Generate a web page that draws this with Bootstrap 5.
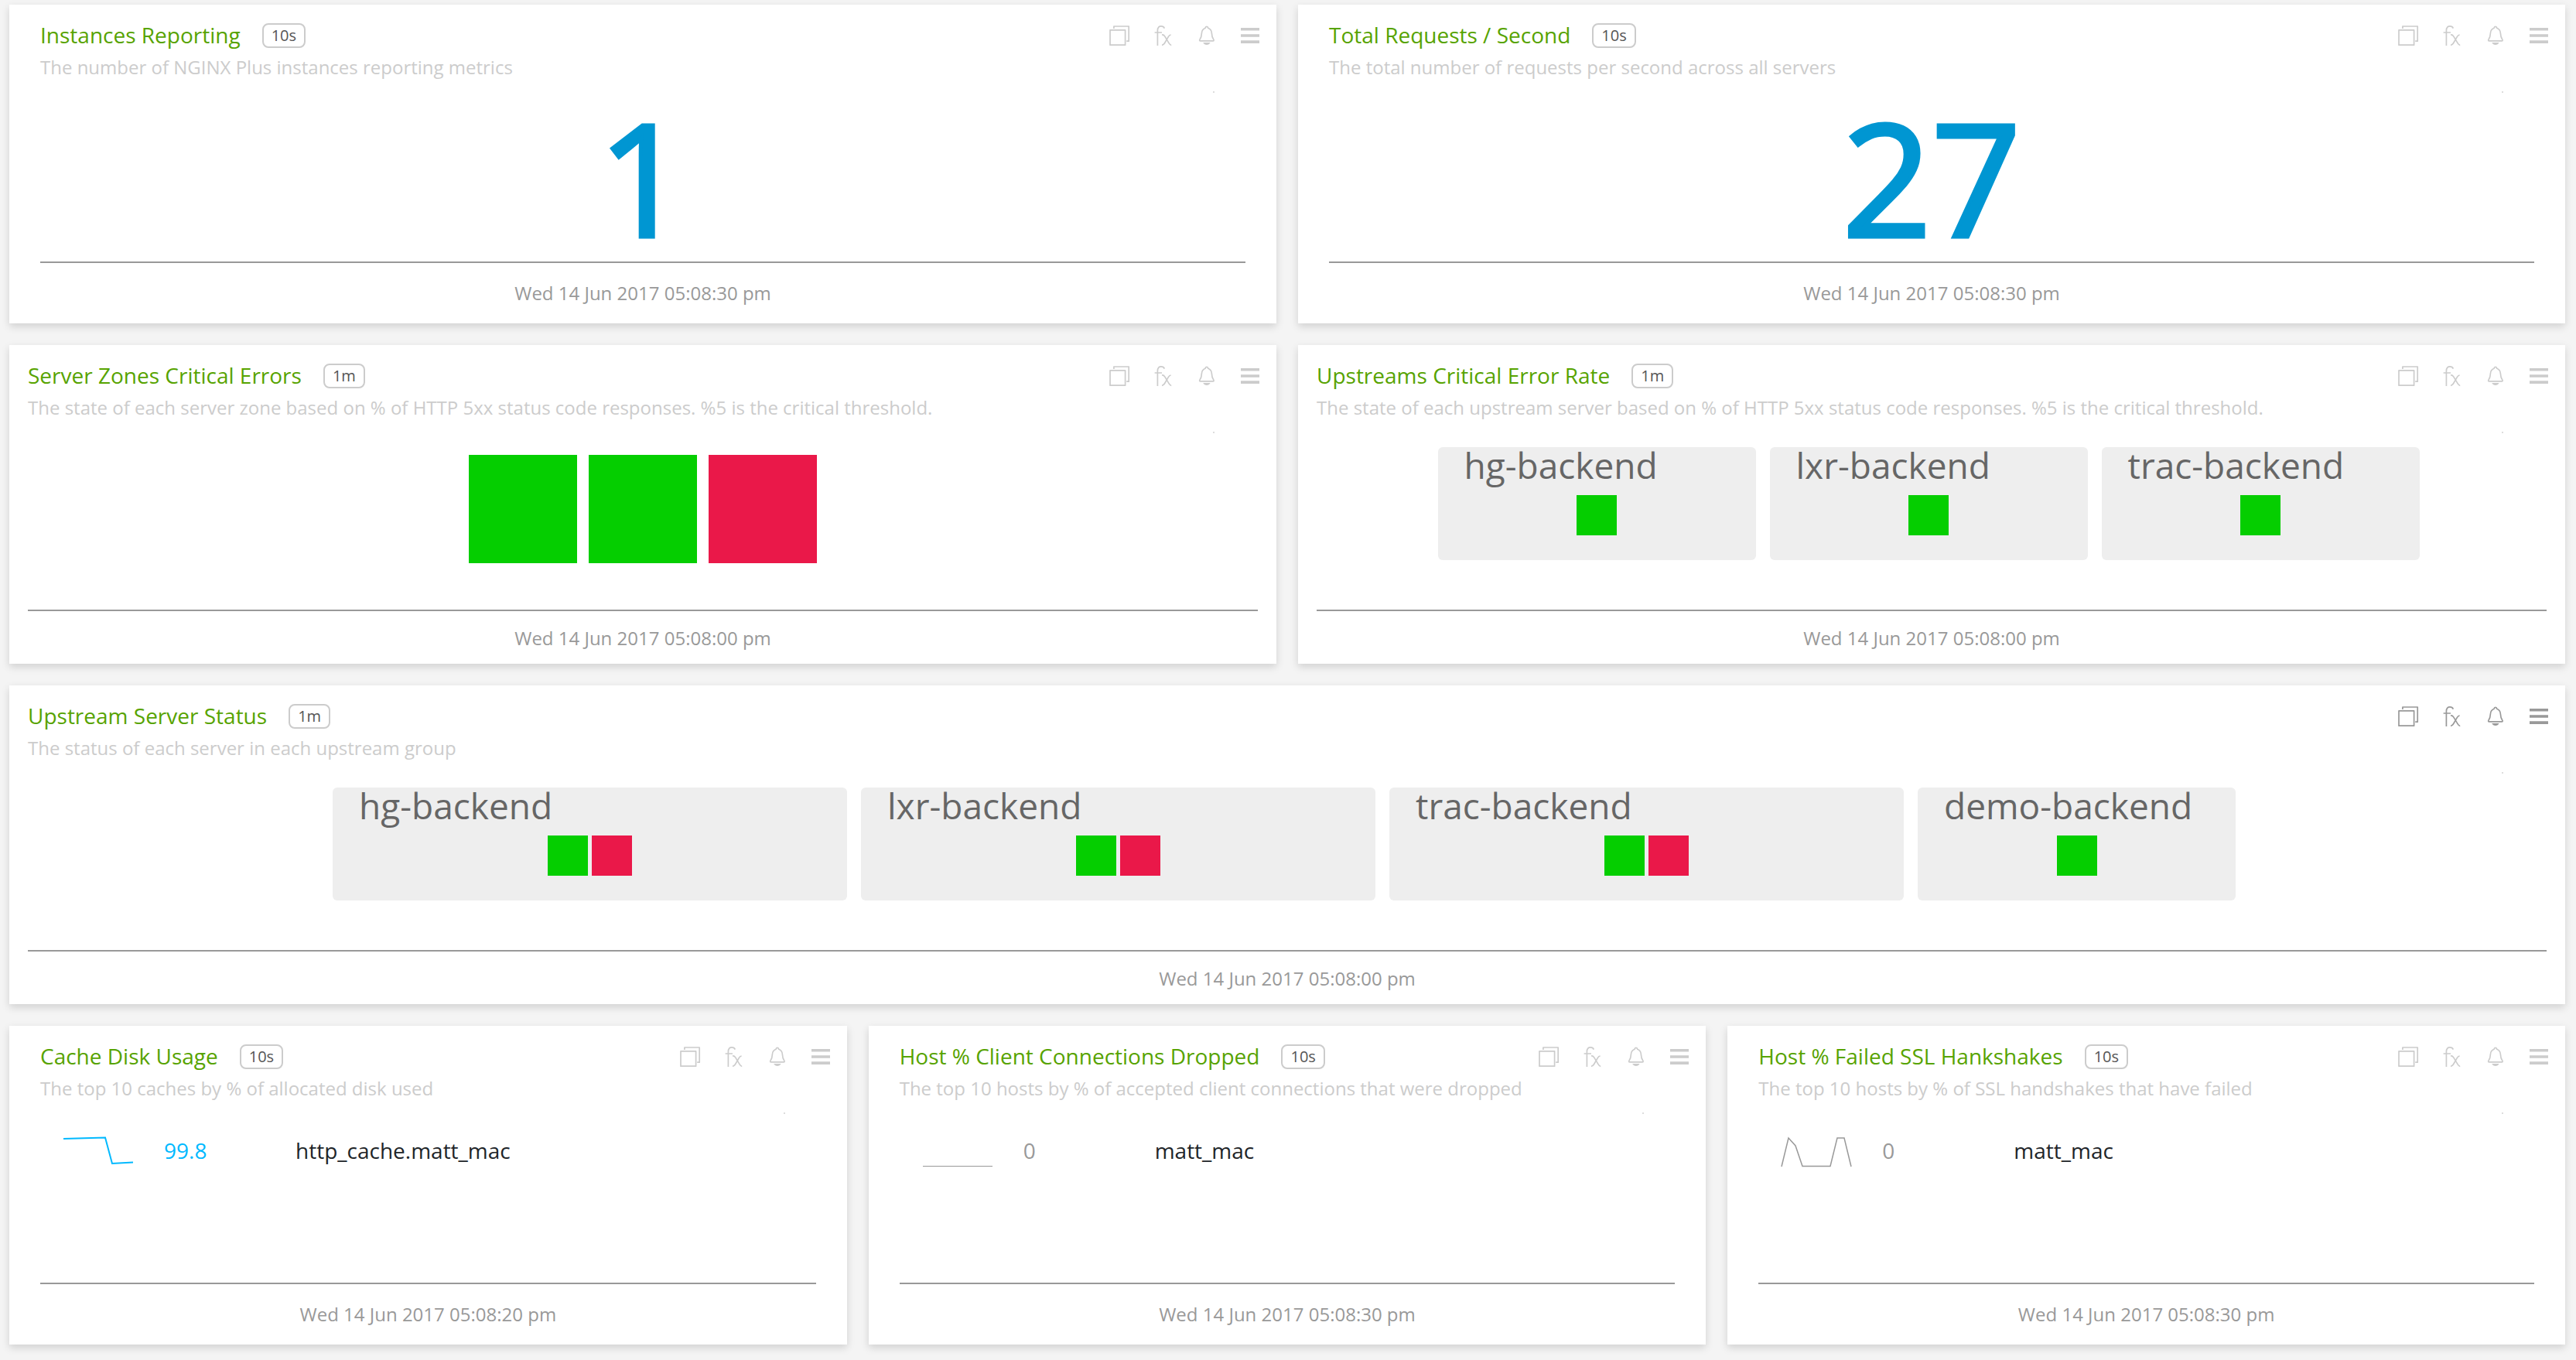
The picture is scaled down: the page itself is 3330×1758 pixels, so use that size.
<!DOCTYPE html>
<html lang="en">
<head>
<meta charset="utf-8">
<meta name="viewport" content="width=device-width, initial-scale=1">
<title>NGINX Plus dashboard</title>
<link href="https://cdn.jsdelivr.net/npm/bootstrap@5.3.0/dist/css/bootstrap.min.css" rel="stylesheet">
<style>
  body { background: #f4f4f4; font-family: "Open Sans", "Noto Sans", sans-serif; color: #333; }
  .dash { padding: 6px 14px 20px 12px; }
  .dash > .row { --bs-gutter-x: 28px; --bs-gutter-y: 28px; }
  .panel { --pad: 40px; background: #fff; border: 0; border-radius: 0; padding: 20px var(--pad) 21px; box-shadow: 0 4px 10px rgba(0,0,0,.15); }
  .panel-slim { --pad: 24px; padding-bottom: 15px; }
  .panel-title { font-size: 28px; line-height: 38px; color: #57a300; font-weight: 400; }
  .panel-title a { color: inherit; text-decoration: none; }
  .rate { height: 32px; margin: 2px 0 0 28px; padding: 0 10px; border: 2px solid #ccc; border-radius: 8px; font-size: 20px; line-height: 28px; color: #555; }
  .panel-text { font-size: 24px; line-height: 36px; margin: 5px 0 0; color: #ccc; }
  .tools { gap: 28px; margin-top: 6px; margin-right: calc(20px - var(--pad)); color: #ccc; }
  .tools button { padding: 0; border: 0; background: none; color: inherit; width: 28px; height: 28px; line-height: 0; }
  .tools svg { width: 28px; height: 28px; }
  .tools-active { color: #999; }
  .speck { top: 112px; right: 80px; width: 2px; height: 2px; background: #ddd; }
  .panel-main { height: 233px; }
  .panel-slim .panel-main { height: 243px; }
  .stamp { border-top: 2px solid #999; padding-top: 21px; font-size: 24px; line-height: 36px; color: #999; }
  .panel-slim .stamp { padding-top: 17px; }
  .figure-big { font-size: 202px; line-height: 246px; font-weight: 400; color: #0096d2; -webkit-text-stroke: 5px #0096d2; }
  .zones { gap: 15px; padding-top: 43px; }
  .zone { width: 140px; height: 140px; }
  .ok { background: #05ce00; }
  .bad { background: #ea1849; }
  .groups { gap: 18px; padding: 33px 8px 0 0; }
  .group { width: 411px; padding: 0 30px 32px 34px; background: #eee; border-radius: 6px; }
  .group-wide { width: 665px; }
  .group-name { font-size: 46px; line-height: 46px; margin-bottom: 16px; font-weight: 400; color: #666; }
  .server { width: 52px; height: 52px; }
  .servers { gap: 5px; margin-left: -4px; }
  .hosts { font-size: 28px; line-height: 40px; margin-top: 42px; }
  .hosts td { padding: 0; vertical-align: middle; }
  .hosts td:nth-child(1) { width: 160px; padding-left: 30px; line-height: 0; }
  .hosts td:nth-child(2) { width: 170px; }
  .hosts svg { width: 90px; height: 40px; overflow: visible; }
  .hot { color: #00b9ff; }
  .idle { color: #999; }
</style>
<script src="https://cdn.jsdelivr.net/npm/bootstrap@5.3.0/dist/js/bootstrap.bundle.min.js"></script>
</head>
<body>
<svg class="d-none" aria-hidden="true">
  <symbol id="i-copy" viewBox="0 0 28 28"><g fill="none" stroke="currentColor" stroke-width="1.7" stroke-linejoin="round"><rect x="1" y="6.8" width="19.6" height="19.4"/><path d="M5.9 5V2H25.2V21.2H22.2"/></g></symbol>
  <symbol id="i-fx" viewBox="0 0 28 28"><g fill="none" stroke="currentColor" stroke-width="1.7"><path d="M6.4 27V7.5C6.4 3.2 8.4 1.9 11 1.9C13.2 1.9 14.6 2.8 15.3 4.6M2.6 10H12"/><path d="M12 13C13.9 12.7 14.7 13.4 15.7 14.9L21 23.600C22 25.300 22.700 26.400 24.200 26.300M23.600 13C21.900 13.100 21.300 14 20.400 15.400L15.500 23.800C14.600 25.400 13.700 26.300 12 26.300"/></g></symbol>
  <symbol id="i-bell" viewBox="0 0 28 28"><path fill="none" stroke="currentColor" stroke-width="1.7" stroke-linejoin="round" d="M13.900 2.400C12.700 2.400 12.200 3.200 12 4.300C9 5.400 7.600 7.600 7.400 11C7.200 15 6.600 16.700 5.300 18.600C4.400 19.900 4.500 20.900 5.800 20.900H22C23.300 20.900 23.400 19.900 22.500 18.600C21.200 16.700 20.600 15 20.400 11C20.200 7.600 18.800 5.400 15.800 4.300C15.600 3.200 15.100 2.400 13.900 2.400Z"/><path fill="currentColor" d="M9.200 23H18.600C17.600 25 16 26 13.900 26S10.200 25 9.200 23Z"/></symbol>
  <symbol id="i-menu" viewBox="0 0 28 28"><path fill="currentColor" d="M2 4h24v3.600H2zM2 12.200h24v3.600H2zM2 20.300h24v3.600H2z"/></symbol>
</svg>

<main class="dash">
  <div class="row">
    <div class="col-6">
      <section class="card panel">
        <header class="d-flex justify-content-between">
          <div>
            <div class="d-flex align-items-center"><h2 class="panel-title mb-0"><a href="#">Instances Reporting</a></h2><span class="rate">10s</span></div>
            <p class="panel-text">The number of NGINX Plus instances reporting metrics</p>
          </div>
          <div class="tools d-flex">
            <button type="button" aria-label="Copy"><svg><use href="#i-copy"/></svg></button>
            <button type="button" aria-label="Function"><svg><use href="#i-fx"/></svg></button>
            <button type="button" aria-label="Alerts"><svg><use href="#i-bell"/></svg></button>
            <button type="button" aria-label="Menu"><svg><use href="#i-menu"/></svg></button>
          </div>
        </header>
        <i class="speck position-absolute"></i>
        <div class="panel-main text-center"><div class="figure-big">1</div></div>
        <footer class="stamp text-center">Wed 14 Jun 2017 05:08:30 pm</footer>
      </section>
    </div>
    <div class="col-6">
      <section class="card panel">
        <header class="d-flex justify-content-between">
          <div>
            <div class="d-flex align-items-center"><h2 class="panel-title mb-0"><a href="#">Total Requests / Second</a></h2><span class="rate">10s</span></div>
            <p class="panel-text">The total number of requests per second across all servers</p>
          </div>
          <div class="tools d-flex">
            <button type="button" aria-label="Copy"><svg><use href="#i-copy"/></svg></button>
            <button type="button" aria-label="Function"><svg><use href="#i-fx"/></svg></button>
            <button type="button" aria-label="Alerts"><svg><use href="#i-bell"/></svg></button>
            <button type="button" aria-label="Menu"><svg><use href="#i-menu"/></svg></button>
          </div>
        </header>
        <i class="speck position-absolute"></i>
        <div class="panel-main text-center"><div class="figure-big">27</div></div>
        <footer class="stamp text-center">Wed 14 Jun 2017 05:08:30 pm</footer>
      </section>
    </div>

    <div class="col-6">
      <section class="card panel panel-slim">
        <header class="d-flex justify-content-between">
          <div>
            <div class="d-flex align-items-center"><h2 class="panel-title mb-0"><a href="#">Server Zones Critical Errors</a></h2><span class="rate">1m</span></div>
            <p class="panel-text">The state of each server zone based on % of HTTP 5xx status code responses. %5 is the critical threshold.</p>
          </div>
          <div class="tools d-flex">
            <button type="button" aria-label="Copy"><svg><use href="#i-copy"/></svg></button>
            <button type="button" aria-label="Function"><svg><use href="#i-fx"/></svg></button>
            <button type="button" aria-label="Alerts"><svg><use href="#i-bell"/></svg></button>
            <button type="button" aria-label="Menu"><svg><use href="#i-menu"/></svg></button>
          </div>
        </header>
        <i class="speck position-absolute"></i>
        <div class="panel-main">
          <div class="zones d-flex justify-content-center">
            <div class="zone ok"></div><div class="zone ok"></div><div class="zone bad"></div>
          </div>
        </div>
        <footer class="stamp text-center">Wed 14 Jun 2017 05:08:00 pm</footer>
      </section>
    </div>
    <div class="col-6">
      <section class="card panel panel-slim">
        <header class="d-flex justify-content-between">
          <div>
            <div class="d-flex align-items-center"><h2 class="panel-title mb-0"><a href="#">Upstreams Critical Error Rate</a></h2><span class="rate">1m</span></div>
            <p class="panel-text">The state of each upstream server based on % of HTTP 5xx status code responses. %5 is the critical threshold.</p>
          </div>
          <div class="tools d-flex">
            <button type="button" aria-label="Copy"><svg><use href="#i-copy"/></svg></button>
            <button type="button" aria-label="Function"><svg><use href="#i-fx"/></svg></button>
            <button type="button" aria-label="Alerts"><svg><use href="#i-bell"/></svg></button>
            <button type="button" aria-label="Menu"><svg><use href="#i-menu"/></svg></button>
          </div>
        </header>
        <i class="speck position-absolute"></i>
        <div class="panel-main">
          <div class="groups d-flex justify-content-center">
            <div class="group"><h3 class="group-name">hg-backend</h3><div class="servers d-flex justify-content-center"><div class="server ok"></div></div></div>
            <div class="group"><h3 class="group-name">lxr-backend</h3><div class="servers d-flex justify-content-center"><div class="server ok"></div></div></div>
            <div class="group"><h3 class="group-name">trac-backend</h3><div class="servers d-flex justify-content-center"><div class="server ok"></div></div></div>
          </div>
        </div>
        <footer class="stamp text-center">Wed 14 Jun 2017 05:08:00 pm</footer>
      </section>
    </div>

    <div class="col-12">
      <section class="card panel panel-slim">
        <header class="d-flex justify-content-between">
          <div>
            <div class="d-flex align-items-center"><h2 class="panel-title mb-0"><a href="#">Upstream Server Status</a></h2><span class="rate">1m</span></div>
            <p class="panel-text">The status of each server in each upstream group</p>
          </div>
          <div class="tools tools-active d-flex">
            <button type="button" aria-label="Copy"><svg><use href="#i-copy"/></svg></button>
            <button type="button" aria-label="Function"><svg><use href="#i-fx"/></svg></button>
            <button type="button" aria-label="Alerts"><svg><use href="#i-bell"/></svg></button>
            <button type="button" aria-label="Menu"><svg><use href="#i-menu"/></svg></button>
          </div>
        </header>
        <i class="speck position-absolute"></i>
        <div class="panel-main">
          <div class="groups d-flex justify-content-center">
            <div class="group group-wide"><h3 class="group-name">hg-backend</h3><div class="servers d-flex justify-content-center"><div class="server ok"></div><div class="server bad"></div></div></div>
            <div class="group group-wide"><h3 class="group-name">lxr-backend</h3><div class="servers d-flex justify-content-center"><div class="server ok"></div><div class="server bad"></div></div></div>
            <div class="group group-wide"><h3 class="group-name">trac-backend</h3><div class="servers d-flex justify-content-center"><div class="server ok"></div><div class="server bad"></div></div></div>
            <div class="group"><h3 class="group-name">demo-backend</h3><div class="servers d-flex justify-content-center"><div class="server ok"></div></div></div>
          </div>
        </div>
        <footer class="stamp text-center">Wed 14 Jun 2017 05:08:00 pm</footer>
      </section>
    </div>

    <div class="col-4">
      <section class="card panel">
        <header class="d-flex justify-content-between">
          <div>
            <div class="d-flex align-items-center"><h2 class="panel-title mb-0"><a href="#">Cache Disk Usage</a></h2><span class="rate">10s</span></div>
            <p class="panel-text">The top 10 caches by % of allocated disk used</p>
          </div>
          <div class="tools d-flex">
            <button type="button" aria-label="Copy"><svg><use href="#i-copy"/></svg></button>
            <button type="button" aria-label="Function"><svg><use href="#i-fx"/></svg></button>
            <button type="button" aria-label="Alerts"><svg><use href="#i-bell"/></svg></button>
            <button type="button" aria-label="Menu"><svg><use href="#i-menu"/></svg></button>
          </div>
        </header>
        <i class="speck position-absolute"></i>
        <div class="panel-main">
          <table class="hosts">
            <tr class="hot"><td><svg viewBox="0 0 90 40"><path d="M0 5L54 3.500L63 37L90 35.500" fill="none" stroke="currentColor" stroke-width="2"/></svg></td><td>99.8</td><td class="text-body">http_cache.matt_mac</td></tr>
          </table>
        </div>
        <footer class="stamp text-center">Wed 14 Jun 2017 05:08:20 pm</footer>
      </section>
    </div>
    <div class="col-4">
      <section class="card panel">
        <header class="d-flex justify-content-between">
          <div>
            <div class="d-flex align-items-center"><h2 class="panel-title mb-0"><a href="#">Host % Client Connections Dropped</a></h2><span class="rate">10s</span></div>
            <p class="panel-text">The top 10 hosts by % of accepted client connections that were dropped</p>
          </div>
          <div class="tools d-flex">
            <button type="button" aria-label="Copy"><svg><use href="#i-copy"/></svg></button>
            <button type="button" aria-label="Function"><svg><use href="#i-fx"/></svg></button>
            <button type="button" aria-label="Alerts"><svg><use href="#i-bell"/></svg></button>
            <button type="button" aria-label="Menu"><svg><use href="#i-menu"/></svg></button>
          </div>
        </header>
        <i class="speck position-absolute"></i>
        <div class="panel-main">
          <table class="hosts">
            <tr class="idle"><td><svg viewBox="0 0 90 40"><path d="M0 40.500H90" fill="none" stroke="currentColor"/></svg></td><td>0</td><td class="text-body">matt_mac</td></tr>
          </table>
        </div>
        <footer class="stamp text-center">Wed 14 Jun 2017 05:08:30 pm</footer>
      </section>
    </div>
    <div class="col-4">
      <section class="card panel">
        <header class="d-flex justify-content-between">
          <div>
            <div class="d-flex align-items-center"><h2 class="panel-title mb-0"><a href="#">Host % Failed SSL Hankshakes</a></h2><span class="rate">10s</span></div>
            <p class="panel-text">The top 10 hosts by % of SSL handshakes that have failed</p>
          </div>
          <div class="tools d-flex">
            <button type="button" aria-label="Copy"><svg><use href="#i-copy"/></svg></button>
            <button type="button" aria-label="Function"><svg><use href="#i-fx"/></svg></button>
            <button type="button" aria-label="Alerts"><svg><use href="#i-bell"/></svg></button>
            <button type="button" aria-label="Menu"><svg><use href="#i-menu"/></svg></button>
          </div>
        </header>
        <i class="speck position-absolute"></i>
        <div class="panel-main">
          <table class="hosts">
            <tr class="idle"><td><svg viewBox="0 0 90 40"><path d="M0 41L9 4L18 14L27 40.500H63L72 4H81L90 41" fill="none" stroke="currentColor" stroke-width="1.500"/></svg></td><td>0</td><td class="text-body">matt_mac</td></tr>
          </table>
        </div>
        <footer class="stamp text-center">Wed 14 Jun 2017 05:08:30 pm</footer>
      </section>
    </div>
  </div>
</main>
</body>
</html>
